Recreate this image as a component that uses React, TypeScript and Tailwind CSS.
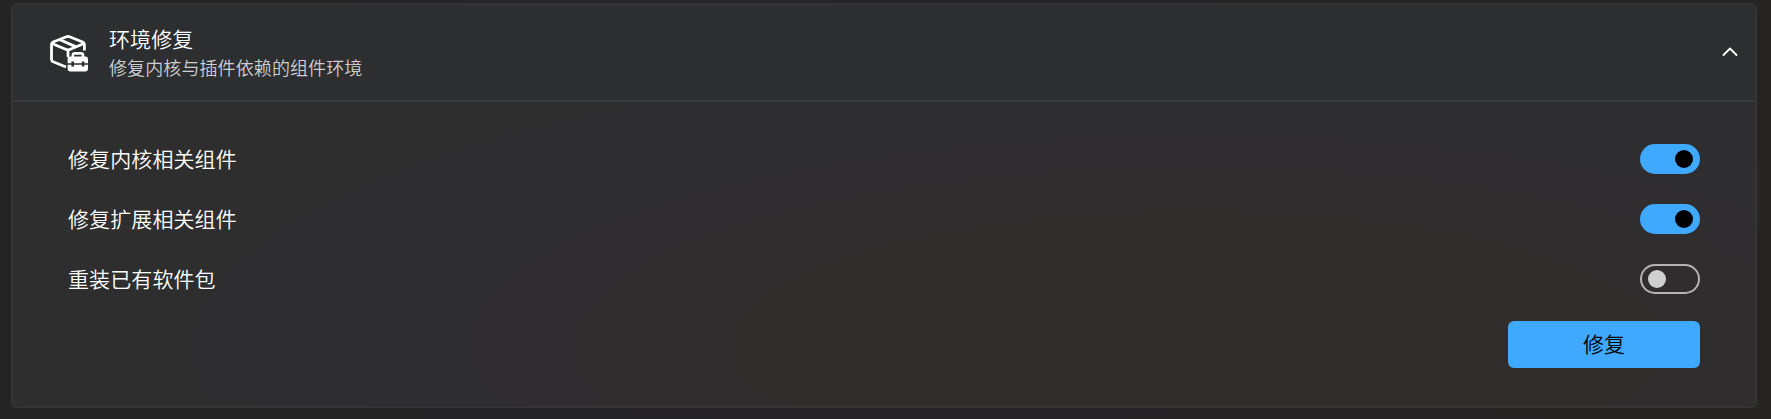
import { useState } from "react";

function BoxToolboxIcon() {
  return (
    <svg viewBox="0 0 40 40" className="-mt-[2px] size-10 shrink-0" fill="none" stroke="#fff" strokeWidth="2.8" strokeLinejoin="round" strokeLinecap="round">
      <path d="M18 35 L5.2 29.8 Q3.5 29 3.5 27.2 L3.5 12.6 Q3.5 10.8 5.2 10 L18.4 4.8 Q20 4.2 21.6 4.8 L34.6 10 Q36.4 10.8 36.4 12.6 L36.4 18.5" strokeLinecap="butt" />
      <path d="M4.5 11.8 L20 18.2 L35.4 11.8 M20 18.2 L20 24 M12 7.8 L27.6 14.6" />
      <path d="M24.8 25 L24.8 23.4 Q24.8 21.4 26.8 21.4 L33 21.4 Q35 21.4 35 23.4 L35 25" strokeWidth="2.6" />
      <path d="M22 24.6 H37.6 Q40 24.6 40 27 V31.2 H36.4 V29.4 H33.8 V31.2 H26 V29.4 H23.4 V31.2 H19.6 V27 Q19.6 24.6 22 24.6 Z M19.6 32.8 H23.4 V34.6 H26 V32.8 H33.8 V34.6 H36.4 V32.8 H40 V37 Q40 39.4 37.6 39.4 H22 Q19.6 39.4 19.6 37 Z" fill="#fff" stroke="none" />
    </svg>
  );
}

function Toggle({ label, initial }: { label: string; initial: boolean }) {
  const [on, setOn] = useState(initial);
  return (
    <div className="flex h-[60px] items-center justify-between">
      <span className="-mt-[3px] text-[21px] leading-[30px] tracking-[0.1px] text-white">{label}</span>
      <button
        role="switch"
        aria-checked={on}
        aria-label={label}
        onClick={() => setOn(!on)}
        className={on
          ? "flex h-[30px] w-[60px] items-center justify-end rounded-full bg-[#3ea9ff] pr-[7px]"
          : "flex h-[30px] w-[60px] items-center justify-start rounded-full border-2 border-[#b4b4b3] pl-[6px]"}
      >
        <span className={on ? "size-[18px] rounded-full bg-black" : "size-[18px] rounded-full bg-[#cfcfcf]"} />
      </button>
    </div>
  );
}

export default function App() {
  return (
    <div className="h-[419px] w-full bg-linear-to-r from-[#252525] via-[#262427] to-[#272423] pt-[3px] pr-[14px] pl-[11px] font-['Noto_Sans_CJK_SC',sans-serif] font-[350]">
      <section className="flex h-[405px] flex-col rounded-[6px] border-2 border-[#353536] bg-[radial-gradient(ellipse_at_68%_85%,#312d2c_0%,#302d2d_25%,#2f2d2f_40%,#2e2e30_52%,#2e2e2e_80%)]">
        <header className="flex h-[97px] items-center border-b-2 border-[#3a3a3b] bg-[#2d2e32]/60 pr-[17px] pl-[35px]">
          <BoxToolboxIcon />
          <div className="ml-[21px] flex flex-1 flex-col tracking-[0.1px]">
            <h2 className="text-[21px] leading-[29px] font-[350] text-white">环境修复</h2>
            <p className="text-[18px] leading-[29px] text-[#cfcfcf]">修复内核与插件依赖的组件环境</p>
          </div>
          <svg viewBox="0 0 16 10" className="-mt-[2px] h-[10px] w-4 shrink-0" fill="none" stroke="#fff" strokeWidth="1.8" strokeLinecap="round" strokeLinejoin="round">
            <path d="M1.5 8 L8 1.5 L14.5 8" />
          </svg>
        </header>
        <div className="flex flex-col pt-[27px] pr-[55px] pl-[55px]">
          <Toggle label="修复内核相关组件" initial={true} />
          <Toggle label="修复扩展相关组件" initial={true} />
          <Toggle label="重装已有软件包" initial={false} />
          <button className="mt-3 h-[47px] w-48 self-end rounded-[6px] bg-[#3ea9ff] pb-[3px] text-[21px] leading-[30px] text-black">修复</button>
        </div>
      </section>
    </div>
  );
}
